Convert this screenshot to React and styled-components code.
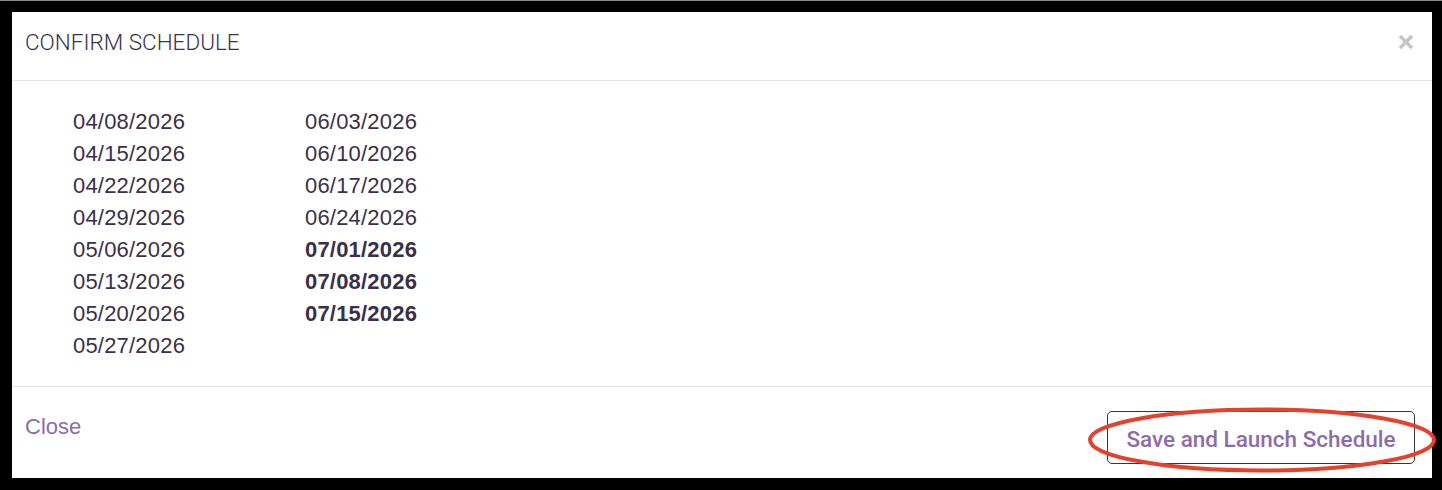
import React from 'react';
import styled, { createGlobalStyle } from 'styled-components';

const GlobalStyle = createGlobalStyle`
  html, body {
    margin: 0;
    padding: 0;
    background: #000;
  }
  body {
    font-family: "Liberation Sans", Arial, sans-serif;
  }
`;

const leftDates = ['04/08/2026', '04/15/2026', '04/22/2026', '04/29/2026', '05/06/2026', '05/13/2026', '05/20/2026', '05/27/2026'];
const rightDates = [
  { date: '06/03/2026' },
  { date: '06/10/2026' },
  { date: '06/17/2026' },
  { date: '06/24/2026' },
  { date: '07/01/2026', isNew: true },
  { date: '07/08/2026', isNew: true },
  { date: '07/15/2026', isNew: true },
];

const App = () => {
  return (
    <>
      <GlobalStyle />
      <Backdrop>
        <Modal>
          <ModalHeader>
            <Title>CONFIRM SCHEDULE</Title>
            <CloseIcon aria-label="close">
              <svg width="16" height="16" viewBox="0 0 16 16">
                <path d="M2 2 L14 14 M14 2 L2 14" stroke="#c6c6c6" strokeWidth="3.6" strokeLinecap="butt" />
              </svg>
            </CloseIcon>
          </ModalHeader>

          <ModalBody>
            <DateColumn>
              {leftDates.map((d) => (
                <DateItem key={d}>{d}</DateItem>
              ))}
            </DateColumn>
            <DateColumn>
              {rightDates.map((d) => (
                <DateItem key={d.date} $bold={d.isNew}>{d.date}</DateItem>
              ))}
            </DateColumn>
          </ModalBody>

          <ModalFooter>
            <CloseLink>Close</CloseLink>
            <ButtonWrap>
              <LaunchButton>Save and Launch Schedule</LaunchButton>
              <Highlight viewBox="0 0 350 66" preserveAspectRatio="none">
                <ellipse cx="175" cy="33" rx="172" ry="30.5" fill="none" stroke="#e5422d" strokeWidth="4" />
              </Highlight>
            </ButtonWrap>
          </ModalFooter>
        </Modal>
      </Backdrop>
    </>
  );
};

export default App;

const Backdrop = styled.div`
  padding: 12px 10px 12px 12px;
  height: 490px;
  box-sizing: border-box;
  background: #000;
  border-top: 1px solid #8a8a8a;
`;

const Modal = styled.div`
  background: #fff;
  height: 466px;
  box-sizing: border-box;
  display: flex;
  flex-direction: column;
  margin-top: -1px;
`;

const ModalHeader = styled.div`
  display: flex;
  align-items: center;
  justify-content: space-between;
  height: 69px;
  padding: 0 18px 8px 13px;
  border-bottom: 1px solid #e6e6e6;
  box-sizing: border-box;
`;

const Title = styled.h4`
  margin: 0;
  font-family: Roboto, "Liberation Sans", sans-serif;
  font-weight: 300;
  font-size: 22.5px;
  color: #3b3049;
  letter-spacing: 0;
`;

const CloseIcon = styled.span`
  display: flex;
  width: 16px;
  height: 16px;
`;

const ModalBody = styled.div`
  display: flex;
  padding: 25px 0 24px 61px;
  border-bottom: 1px solid #e6e6e6;
`;

const DateColumn = styled.div`
  width: 232px;
  display: flex;
  flex-direction: column;
`;

const DateItem = styled.div`
  font-size: 22px;
  line-height: 32px;
  height: 32px;
  color: #3b3049;
  letter-spacing: 0.2px;
  font-weight: ${(p) => (p.$bold ? 700 : 400)};
`;

const ModalFooter = styled.div`
  flex: 1;
  display: flex;
  justify-content: space-between;
  align-items: flex-start;
  padding: 24px 17px 0 13px;
`;

const CloseLink = styled.a`
  font-size: 22px;
  line-height: 31px;
  color: #8e6ca8;
  cursor: pointer;
`;

const ButtonWrap = styled.div`
  position: relative;
`;

const LaunchButton = styled.button`
  width: 308px;
  height: 53px;
  box-sizing: border-box;
  border: 1px solid #3b3049;
  border-radius: 5px;
  background: #fff;
  color: #8e6ca8;
  font-family: Roboto, "Liberation Sans", sans-serif;
  font-weight: 500;
  font-size: 22.5px;
  padding: 0;
  padding-top: 2px;
  cursor: pointer;
`;

const Highlight = styled.svg`
  position: absolute;
  left: -20px;
  top: -4px;
  width: 350px;
  height: 66px;
  pointer-events: none;
  overflow: visible;
`;
